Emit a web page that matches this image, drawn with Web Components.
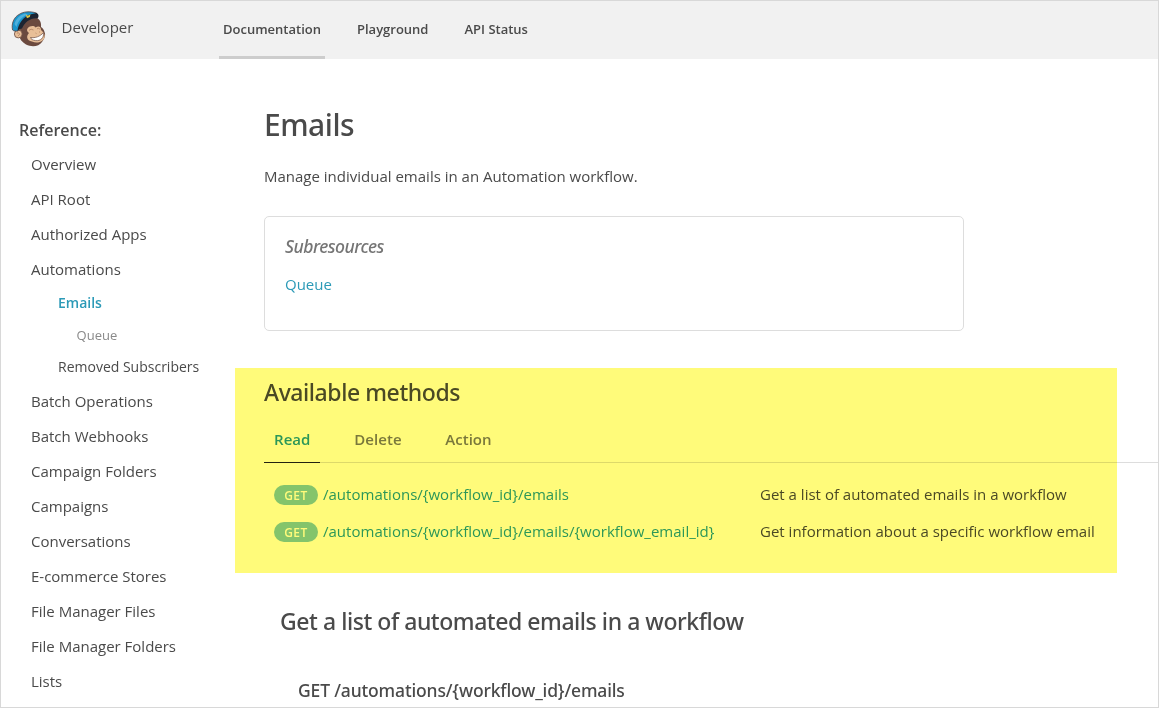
<!DOCTYPE html>
<html lang="en">
<head>
<meta charset="utf-8">
<title>Emails – Developer</title>
<style>
html, body { margin: 0; height: 100%; }
body { font: 15px/20px "Open Sans", sans-serif; color: #4a4a4a; background: #fff; overflow: hidden; }
</style>
</head>
<body>
<docs-page></docs-page>

<template id="t-logo">
<style>:host { display: block; width: 36px; height: 38px; } svg { display: block; }</style>
<svg width="36" height="38" viewBox="0 0 36 38">
  <path d="M8 15C13 9 21 7 26 8C29 9.500 30.500 13 30 17C32 18 33 20 33.500 22C35 25 33.500 29 31 32C28 36.500 21 37.500 15 34.500C11 32 8.500 29 8.500 26Z" fill="#6b4a3f"/>
  <path d="M16.500 18.500C19 15.500 23 15.500 24.500 17.500C28 15.500 30 17 30 20C32 22 34.300 24 33.500 27.500C32 32 26 34 21 31.500C15.500 30.500 15 26 18 23C16 21.500 15.500 20 16.500 18.500Z" fill="#e8bf98"/>
  <circle cx="7.300" cy="24" r="3.900" fill="#e8bf98" stroke="#6b4a3f" stroke-width=".8"/>
  <path d="M5.800 23.300Q7.500 21.500 8.700 24.200L7.300 25.800" fill="none" stroke="#a87a5e" stroke-width=".8"/>
  <path d="M19.500 27.500C24 28.300 29 26.500 32.300 22.800C33.500 27.500 29.500 31.300 24.500 30.600C21.500 30.200 20 29.200 19.500 27.500Z" fill="#fff" stroke="#6b4a3f" stroke-width=".7"/>
  <path d="M18 20.300Q20 18.300 22.500 20M26 18.800Q28 17.600 29 19.300M24.500 23l1 .6M28 22.200l1-.4" fill="none" stroke="#b08262" stroke-width=".8"/>
  <path d="M1.600 20C0 14 3 7 8 4.500C12 1.500 19 1 25.500 3L25 8C17 7 10 13 7 21C5 21 3 21.500 1.600 20Z" fill="#1a94cb" stroke="#5c4543" stroke-width=".8"/>
  <path d="M3.500 14C5 8.500 9 5 14 3.500L17 4.500C11 6.500 7 11 5.500 17Z" fill="#4fb0dc"/>
  <path d="M6.500 21C7 14 12.500 6.500 19 4.500L25.500 3C28 4 28 7 26.500 8.500C20 7.500 14 12 11 18.500C9.500 18.500 7.500 19.500 6.500 21Z" fill="#1c2431"/>
  <path d="M14.500 4.500L16.800 5.800L19.500 4.200L18.800 7L16 8.200Z" fill="#e0c545"/>
</svg>
</template>

<template id="t-header">
<style>
:host { display: flex; height: 58px; background: #f1f1f1; box-sizing: border-box; }
docs-logo { margin: 9px 0 0 10px; }
.name { width: 157.4px; margin-left: 14.6px; line-height: 52px; }
nav { display: flex; gap: 28px; }
</style>
<docs-logo></docs-logo><div class="name">Developer</div>
<nav><nav-tab current>Documentation</nav-tab><nav-tab>Playground</nav-tab><nav-tab>API Status</nav-tab></nav>
</template>

<template id="t-nav-tab">
<style>
:host { display: block; box-sizing: border-box; height: 58px; padding: 0 4px; font-size: 13px; font-weight: 600; line-height: 57px; }
:host([current]) { border-bottom: 3px solid #cdcdcd; }
</style><slot></slot>
</template>

<template id="t-side-link">
<style>
:host { display: block; height: 35px; line-height: 35px; padding-left: 12px; white-space: nowrap; }
:host([level="2"]) { height: 32px; line-height: 32px; padding-left: 39px; font-size: 14px; }
:host([level="3"]) { height: 32px; line-height: 33px; padding-left: 57.6px; font-size: 13px; color: #8a8a8a; }
:host([current]) { font-weight: 600; color: #2c9ab7; }
</style><slot></slot>
</template>

<template id="t-sidebar">
<style>
:host { display: block; width: 234px; box-sizing: border-box; padding: 59px 0 0 18px; flex: none; }
h2 { margin: 0 0 5px; font-size: 16px; line-height: 24px; font-weight: 600; }
.group { padding-bottom: 1px; }
</style>
<h2>Reference:</h2>
<side-link>Overview</side-link>
<side-link>API Root</side-link>
<side-link>Authorized Apps</side-link>
<side-link>Automations</side-link>
<div class="group">
<side-link level="2" current>Emails</side-link>
<side-link level="3">Queue</side-link>
<side-link level="2">Removed Subscribers</side-link>
</div>
<side-link>Batch Operations</side-link>
<side-link>Batch Webhooks</side-link>
<side-link>Campaign Folders</side-link>
<side-link>Campaigns</side-link>
<side-link>Conversations</side-link>
<side-link>E-commerce Stores</side-link>
<side-link>File Manager Files</side-link>
<side-link>File Manager Folders</side-link>
<side-link>Lists</side-link>
</template>

<template id="t-subresources">
<style>
:host { display: block; box-sizing: border-box; width: 700px; height: 115px; border: 1px solid #ddd; border-radius: 5px; padding: 17px 20px; }
h3 { margin: 0 0 16px; font: italic 500 17.5px/24px "Noto Sans", sans-serif; color: #757575; letter-spacing: -.5px; }
.link { color: #2c9ab7; }
</style>
<h3>Subresources</h3><div class="link"><slot></slot></div>
</template>

<template id="t-method-tab">
<style>
:host { display: block; box-sizing: border-box; height: 39px; padding: 0 10px; border-bottom: 1px solid transparent; font-weight: 600; line-height: 30px; letter-spacing: .05px; color: #7a7a7a; }
:host([current]) { color: #2c9ab7; border-color: #222; padding-right: 9.5px; margin-right: .7px; }
</style><slot></slot>
</template>

<template id="t-method-row">
<style>
:host { display: grid; grid-template-columns: 44px 437px 1fr; column-gap: 5px; height: 37px; line-height: 20px; white-space: nowrap; }
.verb { height: 20px; border-radius: 10px; background: #84c7df; color: #fff; font-size: 12px; font-weight: 600; line-height: 21px; letter-spacing: .5px; text-align: center; margin-top: 1px; }
.path { color: #2c9ab7; letter-spacing: .015px; }
.about { margin-left: -5px; letter-spacing: .01px; }
</style>
<div class="verb">GET</div><div class="path"><slot name="path"></slot></div><div class="about"><slot></slot></div>
</template>

<template id="t-methods">
<style>
:host { display: block; position: relative; height: 205px; box-sizing: border-box; padding: 9px 0 0 29px; }
h2 { margin: 0 0 17px; font: 500 23px/30px "Noto Sans", sans-serif; letter-spacing: -.43px; }
.tabs { display: flex; gap: 23.6px; height: 39px; box-shadow: inset 0 -1px #ddd; margin-bottom: 21px; }
.rows { padding-left: 10px; }
.marker { position: absolute; inset: 0 41px 0 0; background: #fffb7a; mix-blend-mode: multiply; pointer-events: none; }
</style>
<h2>Available methods</h2>
<div class="tabs"><method-tab current>Read</method-tab><method-tab>Delete</method-tab><method-tab>Action</method-tab></div>
<div class="rows">
<method-row><span slot="path">/automations/{workflow_id}/emails</span>Get a list of automated emails in a workflow</method-row>
<method-row><span slot="path">/automations/{workflow_id}/emails/{workflow_email_id}</span>Get information about a specific workflow email</method-row>
</div>
<div class="marker"></div>
</template>

<template id="t-content">
<style>
:host { display: block; flex: 1; min-width: 0; padding-top: 46px; }
.intro { padding-left: 29px; margin-bottom: 37.4px; }
h1, h2, h3 { font-family: "Noto Sans", sans-serif; font-weight: 500; }
h1 { margin: 0 0 21px; font-size: 30px; line-height: 40px; letter-spacing: -.5px; }
p { margin: 0 0 30px; }
h2 { margin: 33px 0 0 45px; font-size: 23px; line-height: 30px; letter-spacing: -.45px; }
h3 { margin: 42px 0 0 63px; font-size: 17.5px; line-height: 25px; letter-spacing: -.15px; }
</style>
<div class="intro">
<h1>Emails</h1>
<p>Manage individual emails in an Automation workflow.</p>
<sub-resources>Queue</sub-resources>
</div>
<available-methods></available-methods>
<h2>Get a list of automated emails in a workflow</h2>
<h3>GET /automations/{workflow_id}/emails</h3>
</template>

<template id="t-page">
<style>
:host { display: block; box-sizing: border-box; width: 1159px; height: 708px; border: 1px solid #d8d8d8; overflow: hidden; background: #fff; }
main { display: flex; }
</style>
<docs-header></docs-header>
<main><docs-sidebar></docs-sidebar><docs-content></docs-content></main>
</template>

<script>
function define(name, id) {
  customElements.define(name, class extends HTMLElement {
    constructor() {
      super();
      this.attachShadow({ mode: "open" }).append(document.getElementById(id).content.cloneNode(true));
    }
  });
}
define("docs-logo", "t-logo");
define("nav-tab", "t-nav-tab");
define("docs-header", "t-header");
define("side-link", "t-side-link");
define("docs-sidebar", "t-sidebar");
define("sub-resources", "t-subresources");
define("method-tab", "t-method-tab");
define("method-row", "t-method-row");
define("available-methods", "t-methods");
define("docs-content", "t-content");
define("docs-page", "t-page");
</script>
</body>
</html>
